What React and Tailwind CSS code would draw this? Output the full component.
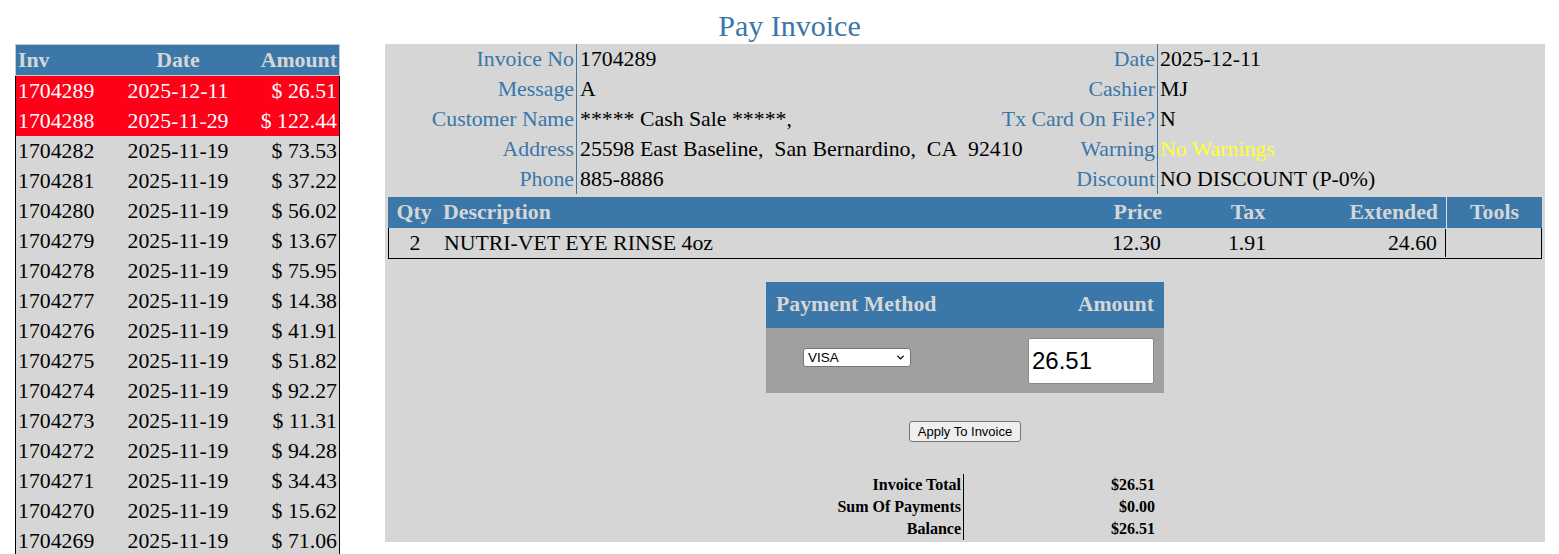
import { ChevronDown } from 'lucide-react'

const invoices = [
    { inv: '1704289', date: '2025-12-11', amount: '$ 26.51', hot: true },
    { inv: '1704288', date: '2025-11-29', amount: '$ 122.44', hot: true },
    { inv: '1704282', date: '2025-11-19', amount: '$ 73.53' },
    { inv: '1704281', date: '2025-11-19', amount: '$ 37.22' },
    { inv: '1704280', date: '2025-11-19', amount: '$ 56.02' },
    { inv: '1704279', date: '2025-11-19', amount: '$ 13.67' },
    { inv: '1704278', date: '2025-11-19', amount: '$ 75.95' },
    { inv: '1704277', date: '2025-11-19', amount: '$ 14.38' },
    { inv: '1704276', date: '2025-11-19', amount: '$ 41.91' },
    { inv: '1704275', date: '2025-11-19', amount: '$ 51.82' },
    { inv: '1704274', date: '2025-11-19', amount: '$ 92.27' },
    { inv: '1704273', date: '2025-11-19', amount: '$ 11.31' },
    { inv: '1704272', date: '2025-11-19', amount: '$ 94.28' },
    { inv: '1704271', date: '2025-11-19', amount: '$ 34.43' },
    { inv: '1704270', date: '2025-11-19', amount: '$ 15.62' },
    { inv: '1704269', date: '2025-11-19', amount: '$ 71.06' },
]

const info = [
    { l: 'Invoice No', v: '1704289', l2: 'Date', v2: '2025-12-11' },
    { l: 'Message', v: 'A', l2: 'Cashier', v2: 'MJ' },
    { l: 'Customer Name', v: '***** Cash Sale *****,', l2: 'Tx Card On File?', v2: 'N' },
    { l: 'Address', v: '25598 East Baseline,\u00a0 San Bernardino,\u00a0 CA\u00a0 92410', l2: 'Warning', v2: 'No Warnings', warn: true },
    { l: 'Phone', v: '885-8886', l2: 'Discount', v2: 'NO DISCOUNT (P-0%)' },
]

const totals = [
    { label: 'Invoice Total', value: '$26.51' },
    { label: 'Sum Of Payments', value: '$0.00' },
    { label: 'Balance', value: '$26.51' },
]

export default function App() {
    return (
        <div className="w-[1559px] h-[554px] overflow-hidden bg-white font-['Liberation_Serif',serif] text-[21.8px] leading-none">
            {/* Title */}
            <div className="h-[44px] pl-[20px] flex items-center justify-center">
                <h1 className="text-[30px] text-[#3a76a8] pt-[8px]">Pay Invoice</h1>
            </div>

            <div className="flex items-start">
                {/* Invoice list */}
                <div className="ml-[15px] w-[325px]">
                    <div className="grid grid-cols-[98px_122px_1fr] h-[32px] pt-[2px] items-center bg-[#3b78a9] border border-[#c9c9c9] font-bold text-[#d6d6d6] px-[2px]">
                        <span>Inv</span>
                        <span className="text-center pl-[2px]">Date</span>
                        <span className="text-right">Amount</span>
                    </div>
                    <div className="border-x border-black bg-[#d6d6d6]">
                        {invoices.map((row, i) => (
                            <div
                                key={i}
                                className={`grid grid-cols-[98px_122px_1fr] h-[30px] pt-[2px] items-center px-[2px] ${row.hot ? 'bg-[#ff0019] text-white' : 'text-black'}`}
                            >
                                <span>{row.inv}</span>
                                <span className="text-center pl-[2px]">{row.date}</span>
                                <span className="text-right">{row.amount}</span>
                            </div>
                        ))}
                    </div>
                </div>

                {/* Invoice panel */}
                <div className="ml-[45px] w-[1160px] h-[498px] bg-[#d6d6d6]">
                    {/* Header info */}
                    <div className="flex flex-col">
                        {info.map((r, i) => (
                            <div key={i} className="flex h-[30px] items-center">
                                <div className="w-[192px] h-full pt-[2px] flex items-center justify-end pr-[2px] border-r border-[#3a76a8] text-[#3a76a8] whitespace-nowrap">{r.l}</div>
                                <div className="w-[260px] h-full pt-[2px] flex items-center pl-[3px] whitespace-nowrap">{r.v}</div>
                                <div className="flex-1 h-full pt-[2px] flex items-center justify-end pr-[2px] border-r border-[#3a76a8] text-[#3a76a8] whitespace-nowrap">{r.l2}</div>
                                <div className={`w-[387px] h-full pt-[2px] flex items-center pl-[2px] whitespace-nowrap ${r.warn ? 'text-[#ffff33]' : 'text-black'}`}>{r.v2}</div>
                            </div>
                        ))}
                    </div>

                    {/* Items table */}
                    <div className="mx-[3px] mt-[3px]">
                        <div className="grid grid-cols-[52px_1fr_85px_166px_116px_95px] h-[31px] items-center bg-[#3b78a9] font-bold text-[#d6d6d6]">
                            <span className="text-center">Qty</span>
                            <span className="pl-[3px]">Description</span>
                            <span className="text-right pr-[3px]">Price</span>
                            <span className="text-center">Tax</span>
                            <span className="h-full flex items-center justify-end pr-[8px] border-r border-[#e0e0e0]">Extended</span>
                            <span className="text-center">Tools</span>
                        </div>
                        <div className="grid grid-cols-[52px_1fr_85px_166px_116px_95px] h-[31px] pt-[2px] items-center border-l border-r border-b border-black">
                            <span className="text-center">2</span>
                            <span className="pl-[3px]">NUTRI-VET EYE RINSE 4oz</span>
                            <span className="text-right pr-[3px]">12.30</span>
                            <span className="text-center">1.91</span>
                            <span className="h-full -mt-[2px] flex items-center justify-end pr-[8px] pt-[2px] border-r border-black">24.60</span>
                            <span></span>
                        </div>
                    </div>

                    {/* Payment */}
                    <div className="mx-auto mt-[23px] w-[398px]">
                        <div className="flex h-[46px] items-center justify-between px-[10px] bg-[#3b78a9] font-bold text-[#d6d6d6]">
                            <span>Payment Method</span>
                            <span>Amount</span>
                        </div>
                        <div className="flex h-[65px] items-center bg-[#a0a0a0] pl-[37px] pr-[10px]">
                            <div className="w-[108px] h-[19px] -mt-[6px] bg-white border border-[#767676] rounded-[3px] flex items-center justify-between px-[4px] font-['Liberation_Sans',sans-serif] text-[13.5px] text-black">
                                <span>VISA</span>
                                <ChevronDown className="w-[11px] h-[11px]" strokeWidth={3} />
                            </div>
                            <div className="ml-auto w-[126px] h-[46px] bg-white border border-[#8a8a8a] rounded-[2px] flex items-center px-[3px] font-['Liberation_Sans',sans-serif] text-[24px] text-black">
                                26.51
                            </div>
                        </div>
                    </div>

                    {/* Apply button */}
                    <div className="flex justify-center mt-[28px]">
                        <button className="w-[112px] h-[21px] bg-[#efefef] border border-[#767676] rounded-[3px] font-['Liberation_Sans',sans-serif] text-[13px] text-black">
                            Apply To Invoice
                        </button>
                    </div>

                    {/* Totals */}
                    <div className="mx-auto mt-[32px] w-[398px] flex flex-col text-[16px] font-bold text-black">
                        {totals.map((t, i) => (
                            <div key={i} className="grid grid-cols-[198px_1fr] h-[22px]">
                                <span className="h-full flex items-center justify-end pr-[2px] border-r border-black">{t.label}</span>
                                <span className="h-full flex items-center justify-end pr-[9px]">{t.value}</span>
                            </div>
                        ))}
                    </div>
                </div>
            </div>
        </div>
    )
}
